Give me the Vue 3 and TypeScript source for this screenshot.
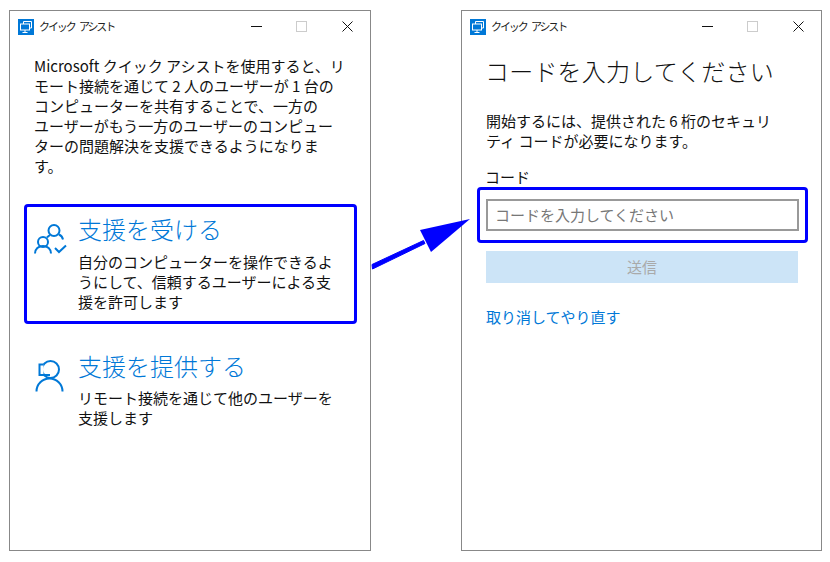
<script setup lang="ts">
const title = 'クイック アシスト'
</script>

<template>
  <div class="page">
    <section class="window">
      <header class="titlebar">
        <svg class="app-icon" width="16" height="16" viewBox="0 0 16 16">
          <rect width="16" height="16" fill="#0078d7" />
          <path d="M5.5 5V2.5h8v6.500h-2" fill="none" stroke="#fff" stroke-width="1" />
          <rect x="2.5" y="5" width="9" height="6" fill="#0078d7" stroke="#fff" stroke-width="1" />
          <path d="M7 11v2M4.5 13.5h5" fill="none" stroke="#fff" stroke-width="1" />
        </svg>
        <span class="title">{{ title }}</span>
        <span class="controls">
          <span class="min"></span>
          <span class="max"></span>
          <svg class="close" width="11" height="11" viewBox="0 0 11 11">
            <path d="M.5.5l10 10M10.5.5l-10 10" stroke="#111" stroke-width="1" fill="none" />
          </svg>
        </span>
      </header>
      <div class="content">
        <p class="intro">
          Microsoft クイック アシストを使用すると、リ<br />
          モート接続を通じて 2 人のユーザーが 1 台の<br />
          コンピューターを共有することで、一方の<br />
          ユーザーがもう一方のユーザーのコンピュー<br />
          ターの問題解決を支援できるようになりま<br />
          す。
        </p>
        <div class="option selected">
          <svg class="option-icon" width="34" height="36" viewBox="0 0 34 36">
            <g fill="none" stroke="#0078d7" stroke-width="2">
              <circle cx="20" cy="8.500" r="5.500" />
              <path d="M25 12.500c2 1 3.500 2.500 4 5" />
              <circle cx="9" cy="20" r="5" />
              <path d="M1 31.500c0-4.500 3.500-7.500 8-7.500s8 3 8 7.500" />
              <path d="M13 15.500c1-1.200 2-1.800 3-2.300" />
              <path d="M21 26l4 4 7-6.500" />
            </g>
          </svg>
          <div>
            <h2>支援を受ける</h2>
            <p>自分のコンピューターを操作できるよ<br />うにして、信頼するユーザーによる支<br />援を許可します</p>
          </div>
        </div>
        <div class="option">
          <svg class="option-icon" width="34" height="36" viewBox="0 0 34 36">
            <g fill="none" stroke="#0078d7" stroke-width="2">
              <circle cx="16.500" cy="10.500" r="8.500" />
              <path d="M9.500 5.500h-4v10.500h4" fill="#fff" />
              <path d="M6 16h10" />
              <path d="M2.500 32.500a13 13 0 0 1 26 0" />
            </g>
          </svg>
          <div>
            <h2>支援を提供する</h2>
            <p>リモート接続を通じて他のユーザーを<br />支援します</p>
          </div>
        </div>
      </div>
    </section>

    <section class="window second">
      <header class="titlebar">
        <svg class="app-icon" width="16" height="16" viewBox="0 0 16 16">
          <rect width="16" height="16" fill="#0078d7" />
          <path d="M5.500 5V2.500h8v6.500h-2" fill="none" stroke="#fff" stroke-width="1" />
          <rect x="2.500" y="5" width="9" height="6" fill="#0078d7" stroke="#fff" stroke-width="1" />
          <path d="M7 11v2M4.500 13.500h5" fill="none" stroke="#fff" stroke-width="1" />
        </svg>
        <span class="title">{{ title }}</span>
        <span class="controls">
          <span class="min"></span>
          <span class="max"></span>
          <svg class="close" width="11" height="11" viewBox="0 0 11 11">
            <path d="M.5.5l10 10M10.500.5l-10 10" stroke="#111" stroke-width="1" fill="none" />
          </svg>
        </span>
      </header>
      <div class="content">
        <h1>コードを入力してください</h1>
        <p class="lead">開始するには、提供された 6 桁のセキュリ<br />ティ コードが必要になります。</p>
        <label class="code-label">コード</label>
        <div class="input-highlight">
          <div class="input">コードを入力してください</div>
        </div>
        <div class="submit">送信</div>
        <a class="link">取り消してやり直す</a>
      </div>
    </section>

    <svg class="arrow" width="110" height="60" viewBox="365 215 110 60">
      <path d="M372.500 269L425 243.500l-1.500-3L372 264.500z" fill="#0000ff" stroke="#0000ff" stroke-width="1" />
      <path d="M470 219L420 230l11 22z" fill="#0000ff" />
    </svg>
  </div>
</template>

<style>
html, body { margin: 0; background: #fff; }
</style>

<style scoped>
.page {
  position: relative;
  width: 830px;
  height: 562px;
  display: flex;
  gap: 90px;
  padding: 10px 0 0 9px;
  box-sizing: border-box;
  background: #fff;
  font-family: "Noto Sans CJK JP", "Noto Sans", sans-serif;
  color: #111;
  overflow: hidden;
}
.window {
  width: 362px;
  height: 541px;
  box-sizing: border-box;
  border: 1px solid #888;
  flex: none;
}
.window.second { width: 361px; }
.titlebar {
  height: 30px;
  display: flex;
  align-items: center;
  padding-left: 8px;
}
.app-icon { flex: none; margin-top: 1px; }
.title {
  margin-left: 5px;
  font-size: 11px;
  letter-spacing: -2.1px;
  word-spacing: 4px;
  white-space: pre;
  color: #222;
}
.controls {
  margin-left: auto;
  display: flex;
  align-items: center;
  padding-right: 17px;
}
.second .controls { padding-right: 17px; }
.min { width: 11px; height: 1px; background: #111; margin-right: 34px; }
.max { width: 9px; height: 9px; border: 1px solid #ccc; margin-right: 35px; }
.close { display: block; }
.content { padding: 0 23px 0 24px; }
.intro {
  margin: 15px 0 0;
  font-size: 15px;
  line-height: 20px;
  white-space: nowrap;
}
.option {
  display: flex;
  box-sizing: border-box;
  width: 333px;
  margin: 28px 0 0 -10px;
  padding: 5px 3px 3px 7px;
  border: 3px solid transparent;
  border-radius: 4px;
}
.option.selected { border-color: #0000ff; height: 120px; }
.option + .option { margin-top: 17px; height: 100px; }
.option-icon { flex: none; margin: 10px 10px 0 0; }
.option h2 {
  margin: 0;
  font-size: 24px;
  line-height: 34px;
  font-weight: 300;
  color: #0078d7;
  white-space: nowrap;
}
.option p {
  margin: 6px 0 0;
  font-size: 15px;
  line-height: 20px;
  white-space: nowrap;
}
.option + .option p { margin-top: 5px; }
h1 {
  margin: 12px 0 0 -1px;
  font-size: 24px;
  line-height: 36px;
  font-weight: 300;
  letter-spacing: 0.2px;
  color: #111;
  white-space: nowrap;
}
.lead {
  margin: 22px 0 0;
  font-size: 15px;
  line-height: 20px;
  white-space: nowrap;
}
.code-label {
  display: block;
  margin-top: 16px;
  margin-left: -1px;
  font-size: 15px;
  line-height: 20px;
}
.input-highlight {
  box-sizing: border-box;
  width: 331px;
  height: 56px;
  margin: 0 0 0 -9px;
  padding: 9px 6px;
  border: 3px solid #0000ff;
  border-radius: 4px;
}
.input {
  box-sizing: border-box;
  height: 32px;
  border: 2px solid #999;
  padding-left: 7px;
  font-size: 15px;
  line-height: 27px;
  color: #777;
  white-space: nowrap;
}
.submit {
  width: 312px;
  height: 32px;
  margin-top: 8px;
  background: #cce4f7;
  color: #a9a9a9;
  font-size: 15px;
  line-height: 32px;
  text-align: center;
}
.link {
  display: block;
  margin-top: 24px;
  font-size: 15px;
  line-height: 20px;
  color: #0078d7;
}
.arrow { position: absolute; left: 365px; top: 215px; }
</style>
